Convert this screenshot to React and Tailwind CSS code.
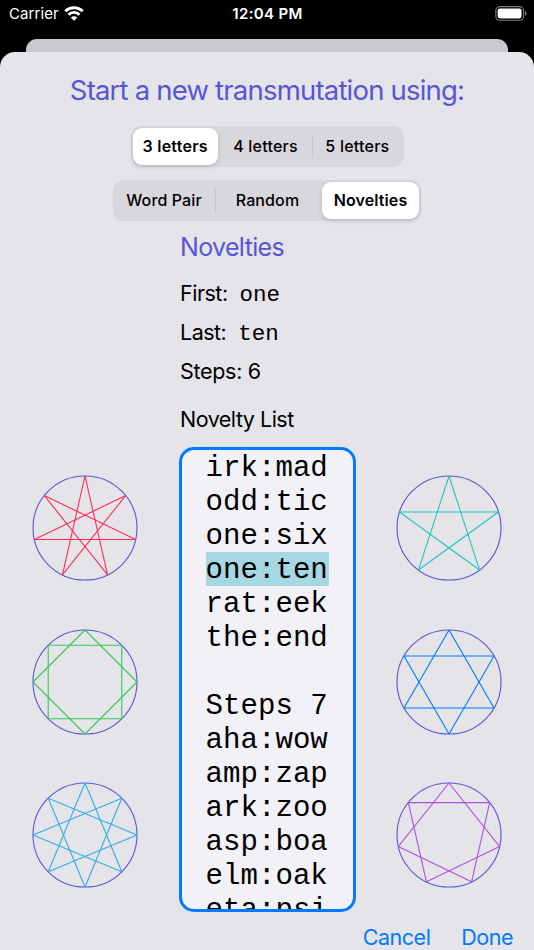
import React from "react";

function StarWheel({ points, step, color }) {
  const r = 52;
  const c = 53;
  const at = (i) => {
    const a = (2 * Math.PI * i) / points - Math.PI / 2;
    return [c + r * Math.cos(a), c + r * Math.sin(a)];
  };
  return (
    <svg width="106" height="106" viewBox="0 0 106 106" fill="none" className="block">
      <circle cx={c} cy={c} r={r} stroke="#5856d6" strokeWidth="1.1" />
      {Array.from({ length: points }, (_, i) => {
        const [x1, y1] = at(i);
        const [x2, y2] = at(i + step);
        return <line key={i} x1={x1} y1={y1} x2={x2} y2={y2} stroke={color} strokeWidth="1.1" />;
      })}
    </svg>
  );
}

function StatusBar() {
  return (
    <div className="flex h-[39px] shrink-0 items-start justify-between pl-[9px] pr-[7px] text-white">
      <div className="flex w-[120px] items-center gap-[5px] pt-[4px]">
        <span className="text-[15px] leading-[20px] tracking-[0.1px]">Carrier</span>
        <svg width="20" height="15" viewBox="0 0 20 15" fill="none" className="-mt-[1px] block">
          <path d="M1.3 5.2a12.4 12.4 0 0 1 17.4 0" stroke="#fff" strokeWidth="3" />
          <path d="M4.5 8.7a7.9 7.9 0 0 1 11 0" stroke="#fff" strokeWidth="2.8" />
          <path d="M10 14.7l-3.2-3.2a4.5 4.5 0 0 1 6.400 0z" fill="#fff" />
        </svg>
      </div>
      <span className="pt-[4px] pr-[1px] text-[15px] font-semibold leading-[20px] tracking-[0.35px]">12:04 PM</span>
      <div className="flex w-[120px] justify-end pt-[6px]">
        <svg width="32" height="15" viewBox="0 0 32 15" className="block">
          <rect x="0.8" y="0.6" width="27.8" height="13.6" rx="4" fill="none" stroke="#7c7c7c" strokeWidth="1.1" />
          <rect x="2.6" y="2.4" width="24" height="10" rx="2.3" fill="#fff" />
          <path d="M30 5.1v4.7c1.1-.4 1.6-1.3 1.6-2.35S31.1 5.5 30 5.1z" fill="#7c7c7c" />
        </svg>
      </div>
    </div>
  );
}

function Segment({ label, selected, className }) {
  return (
    <div
      className={
        "flex h-[37px] items-center justify-center whitespace-nowrap pb-[2px] text-black " +
        (selected ? "rounded-[9px] bg-white font-semibold shadow-[0_2px_5px_rgba(0,0,0,0.14)] " : "font-medium ") +
        className
      }
    >
      {label}
    </div>
  );
}

function Divider({ visible }) {
  return <div className={"h-[23px] w-px " + (visible ? "bg-[#c6c5cb]" : "bg-transparent")} />;
}

const words = [
  "irk:mad", "odd:tic", "one:six", "one:ten", "rat:eek", "the:end", "",
  "Steps 7", "aha:wow", "amp:zap", "ark:zoo", "asp:boa", "elm:oak", "eta:psi",
];

export default function App() {
  return (
    <div className="flex h-[950px] w-[534px] flex-col overflow-hidden bg-black font-['Inter',sans-serif]">
      <StatusBar />
      <div className="mx-[26px] h-[13px] shrink-0 rounded-t-[11px] bg-[#c9c8cd]" />
      <main className="flex flex-1 flex-col rounded-t-[15px] bg-[#e5e4e9] text-black">
        <h1 className="mt-[20px] h-[36px] whitespace-nowrap text-center text-[27.5px] font-normal leading-[36px] tracking-[-0.8px] text-[#5856d6]">
          Start a new transmutation using:
        </h1>

        <div className="mx-auto mt-[18px] flex h-[41px] w-[273px] items-center rounded-[11px] bg-[#d8d7dc] px-[2px] text-[16px] tracking-[0.23px]">
          <Segment label="3 letters" selected className="w-[86px]" />
          <Divider />
          <Segment label="4 letters" className="w-[94px]" />
          <Divider visible />
          <Segment label="5 letters" className="w-[89px]" />
        </div>

        <div className="mx-auto mt-[13px] flex h-[41px] w-[308px] items-center rounded-[11px] bg-[#d8d7dc] px-[2px] text-[16px] tracking-[0.12px]">
          <Segment label="Word Pair" className="w-[100px] pr-[2px]" />
          <Divider visible />
          <Segment label="Random" className="w-[105px] pr-[2px]" />
          <Divider />
          <Segment label="Novelties" selected className="w-[97px]" />
        </div>

        <div className="mt-[10px] flex flex-col whitespace-nowrap pl-[180px] text-[21.5px] tracking-[-0.5px]">
          <h2 className="h-[32px] text-[25px] font-normal leading-[32px] tracking-[-0.65px] text-[#5856d6]">Novelties</h2>
          <div className="mt-[16px] flex h-[28px] items-baseline gap-[12px] leading-[28px]">
            <span>First:</span>
            <span className="font-['Liberation_Mono',monospace] text-[22.5px] tracking-[0px]">one</span>
          </div>
          <div className="mt-[11px] flex h-[28px] items-baseline gap-[12px] leading-[28px]">
            <span>Last:</span>
            <span className="font-['Liberation_Mono',monospace] text-[22.5px] tracking-[0px]">ten</span>
          </div>
          <div className="mt-[11px] h-[28px] leading-[28px] tracking-[-0.3px]">Steps: 6</div>
          <div className="mt-[20px] h-[28px] leading-[28px]">Novelty List</div>
        </div>

        <div className="mt-[14px] flex h-[465px] shrink-0">
          <div className="flex w-[178.600px] flex-col gap-[47.5px] pl-[31.5px] pt-[28.200px]">
            <StarWheel points={7} step={3} color="#ff2d55" />
            <StarWheel points={8} step={2} color="#34c759" />
            <StarWheel points={8} step={3} color="#32ade6" />
          </div>
          <div className="h-[464.500px] w-[177px] overflow-hidden rounded-[15px] border-[3px] border-[#007aff] bg-[#f2f1f7] pl-[24px] font-['Liberation_Mono',monospace] text-[29.1px] leading-[38px]">
            {words.map((w, i) => (
              <div
                key={i}
                className={"h-[34px] w-[123px] whitespace-pre " + (w === "one:ten" ? "bg-[#a5d8e3]" : "")}
              >
                {w}
              </div>
            ))}
          </div>
          <div className="flex flex-col gap-[47.5px] pl-[40.500px] pt-[28.200px]">
            <StarWheel points={5} step={2} color="#20c5bd" />
            <StarWheel points={6} step={2} color="#007aff" />
            <StarWheel points={7} step={2} color="#af52de" />
          </div>
        </div>

        <div className="mt-[11px] flex h-[28px] shrink-0 justify-end gap-[31px] pr-[21px] text-[21.5px] leading-[28px] tracking-[-0.5px] text-[#007aff]">
          <span>Cancel</span>
          <span>Done</span>
        </div>
      </main>
    </div>
  );
}
